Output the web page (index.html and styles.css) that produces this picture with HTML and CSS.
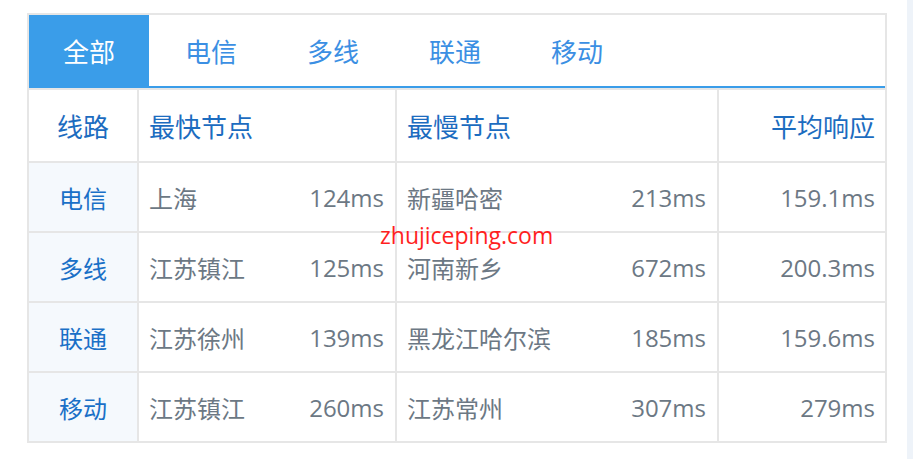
FILE: index.html
```html
<!DOCTYPE html>
<html lang="zh-CN">
<head>
<meta charset="utf-8">
<title>线路测速</title>
<link rel="stylesheet" href="styles.css">
</head>
<body>
<div class="page">
  <div class="panel">
    <div class="tabs">
      <div class="tab active">全部</div>
      <div class="tab">电信</div>
      <div class="tab">多线</div>
      <div class="tab">联通</div>
      <div class="tab">移动</div>
    </div>
    <div class="grid">
      <div class="cell head center">线路</div>
      <div class="cell head">最快节点</div>
      <div class="cell head">最慢节点</div>
      <div class="cell head right">平均响应</div>

      <div class="cell line">电信</div>
      <div class="cell"><span class="name">上海</span><span class="num">124ms</span></div>
      <div class="cell"><span class="name">新疆哈密</span><span class="num">213ms</span></div>
      <div class="cell right"><span class="num">159.1ms</span></div>

      <div class="cell line">多线</div>
      <div class="cell"><span class="name">江苏镇江</span><span class="num">125ms</span></div>
      <div class="cell"><span class="name">河南新乡</span><span class="num">672ms</span></div>
      <div class="cell right"><span class="num">200.3ms</span></div>

      <div class="cell line">联通</div>
      <div class="cell"><span class="name">江苏徐州</span><span class="num">139ms</span></div>
      <div class="cell"><span class="name">黑龙江哈尔滨</span><span class="num">185ms</span></div>
      <div class="cell right"><span class="num">159.6ms</span></div>

      <div class="cell line">移动</div>
      <div class="cell"><span class="name">江苏镇江</span><span class="num">260ms</span></div>
      <div class="cell"><span class="name">江苏常州</span><span class="num">307ms</span></div>
      <div class="cell right"><span class="num">279ms</span></div>
    </div>
  </div>
  <div class="strip"></div>
</div>
<div class="watermark">zhujiceping.com</div>
</body>
</html>
```

FILE: styles.css
```css
html, body {
  margin: 0;
  padding: 0;
  background: #ffffff;
}

body {
  font-family: "Noto Sans CJK SC", "Open Sans", sans-serif;
  position: relative;
}

.page {
  display: flex;
  min-height: 459px;
}

.panel {
  margin: 13px 0 0 27px;
  width: 856px;
  border: 2px solid #e6e6e6;
  align-self: flex-start;
}

.strip {
  margin-left: auto;
  width: 6px;
  background: #eef3f9;
}

.tabs {
  display: flex;
  height: 71px;
  border-bottom: 2px solid #3a9de9;
}

.tab {
  width: 120px;
  margin-right: 2px;
  display: flex;
  align-items: center;
  justify-content: center;
  font-size: 26px;
  color: #3b8fe3;
}

.tab.active {
  background: #3a9de9;
  color: #ffffff;
}

.grid {
  display: grid;
  grid-template-columns: 108px 256px 320px 166px;
  grid-template-rows: 71px 68px 68px 68px 68px;
  gap: 2px;
  padding-top: 2px;
  background: #e6e6e6;
}

.cell {
  background: #ffffff;
  display: flex;
  align-items: center;
  justify-content: space-between;
  padding: 0 11px 0 10px;
  font-size: 24px;
  color: #6c7884;
}

.cell.head {
  font-size: 26px;
  color: #1c6cc0;
  justify-content: flex-start;
}

.cell.center {
  justify-content: center;
  padding: 0;
}

.cell.right {
  justify-content: flex-end;
  padding-right: 10px;
}

.cell.line {
  background: #f5f9fd;
  color: #1a70c7;
  justify-content: center;
  padding: 0;
}

.num {
  font-family: "Open Sans", sans-serif;
  font-size: 24px;
}

.watermark {
  position: absolute;
  left: 380px;
  top: 224px;
  font-family: "Open Sans", sans-serif;
  font-size: 23px;
  line-height: 23px;
  color: #ff1f1f;
}
```
